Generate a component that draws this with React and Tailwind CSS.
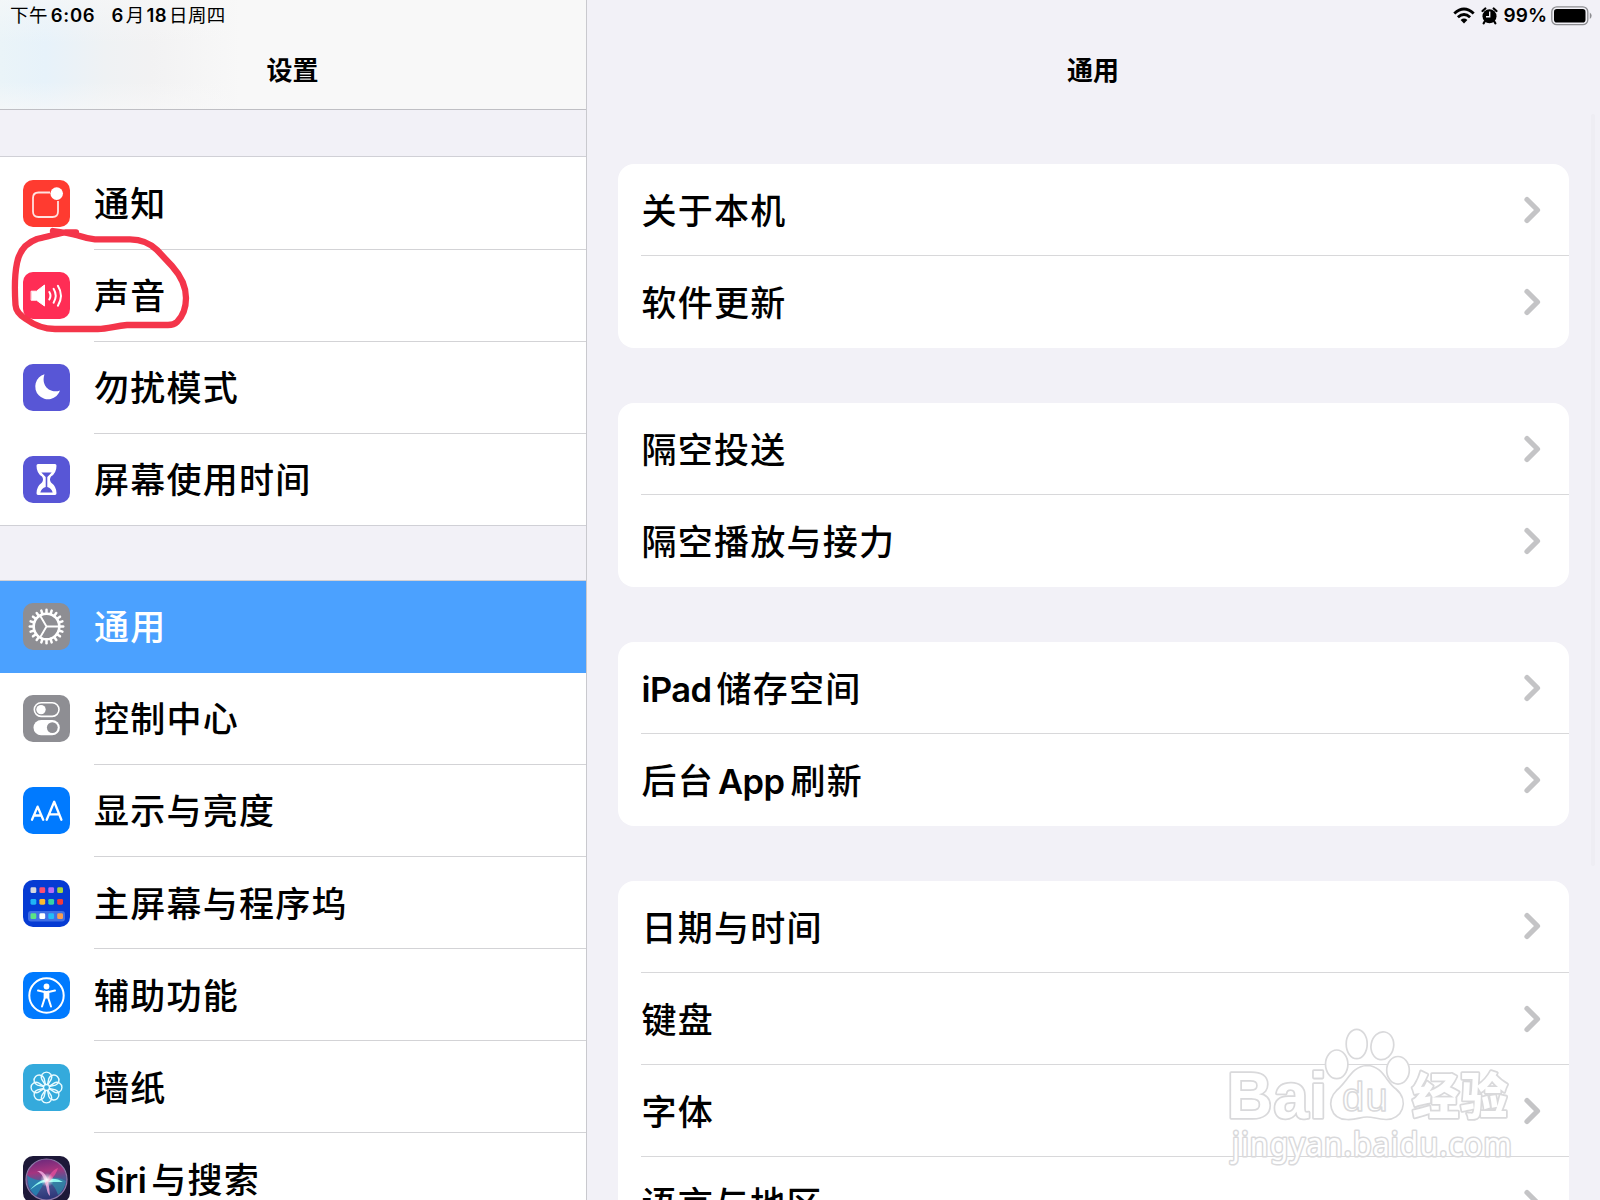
const NotificationIcon = () => (
    <svg viewBox="0 0 47 47" className="size-full" fill="none">
        <path d="M27 12.500H15.500Q10 12.500 10 18V31.500Q10 37 15.500 37H29.500Q35 37 35 31.500V21" stroke="#ffe3e0" strokeWidth="1.800" />
        <circle cx="33.700" cy="13.600" r="6.300" fill="#fff" />
    </svg>
);

const SoundIcon = () => (
    <svg viewBox="0 0 47 47" className="size-full" fill="none" stroke="#fff" strokeLinecap="round">
        <path d="M8.500 19.200H13.500L21.500 13V34L13.500 28.200H8.500Z" fill="#fff" strokeWidth="1" strokeLinejoin="round" />
        <path d="M26.300 20Q28.600 23.700 26.300 27.500M30.600 16.800Q34.800 23.700 30.600 30.700M34.900 13.800Q41 23.700 34.900 33.700" strokeWidth="2" />
    </svg>
);

const MoonIcon = () => (
    <svg viewBox="0 0 47 47" className="size-full">
        <path d="M21.500 10.300A12.700 12.700 0 1 0 37 26.500C28 30 17.500 22.500 21.500 10.300Z" fill="#fff" />
    </svg>
);

const HourglassIcon = () => (
    <svg viewBox="0 0 47 47" className="size-full">
        <path d="M15 8H32Q33.500 8 33.500 9.700Q33.500 17 28 20.500Q26 23.500 28 26.500Q33.500 30.500 33.500 37.300Q33.500 39 32 39H15Q13.500 39 13.500 37.300Q13.500 30.500 19 26.500Q21 23.500 19 20.500Q13.500 17 13.500 9.700Q13.500 8 15 8Z" fill="#fff" />
        <path d="M18.300 16.500H28.700L24.300 21V31Q28.500 32 29.700 36.500H17.300Q18.500 32 22.700 31V21Z" fill="#5856d6" />
    </svg>
);

const GearIcon = () => (
    <svg viewBox="0 0 47 47" className="size-full" fill="none" stroke="#fff">
        <circle cx="23.500" cy="23.500" r="12.800" strokeWidth="2.600" />
        {Array.from({ length: 20 }, (_, i) => (
            <path key={i} d="M23.500 10.500V6.800" strokeWidth="2.500" strokeLinecap="round" transform={`rotate(${i * 18} 23.500 23.500)`} />
        ))}
        <path d="M23.500 23.500H36M23.500 23.500L17.200 12.700M23.500 23.500L17.200 34.300" strokeWidth="1.900" />
    </svg>
);

const ControlIcon = () => (
    <svg viewBox="0 0 47 47" className="size-full" fill="none">
        <rect x="11.300" y="7.800" width="24.700" height="13.600" rx="6.800" stroke="#fff" strokeWidth="1.600" />
        <circle cx="18" cy="14.600" r="4.700" fill="#fff" />
        <rect x="10.500" y="25" width="26.300" height="15.300" rx="7.600" fill="#fff" />
        <circle cx="29.300" cy="32.600" r="5.400" fill="#8e8e93" />
    </svg>
);

const DisplayIcon = () => (
    <svg viewBox="0 0 47 47" className="size-full" fill="none" stroke="#fff" strokeWidth="2.300" strokeLinecap="round" strokeLinejoin="round">
        <path d="M9 32.800L14.600 19.600L20.200 32.800M11 28.500H18.200" />
        <path d="M23.700 32.800L31.200 14.700L38.400 32.800M26.300 27.300H36" />
    </svg>
);

const dots = [
    ['#d5d7e0', '#fb4f71', '#b56cf5', '#a5d53f'],
    ['#1fb5f5', '#fdbb2e', '#35d3a5', '#f23a3a'],
    ['#5be584', '#ffffff', '#23bdf6', '#f99d50'],
];

const HomeIcon = () => (
    <svg viewBox="0 0 47 47" className="size-full">
        <rect x="5" y="31" width="37" height="10.500" rx="3" fill="#3f6fe5" />
        {dots.map((row, y) =>
            row.map((color, x) => (
                <rect key={`${x}-${y}`} x={7.500 + x * 8.900} y={[7.300, 18.900, 33.300][y]} width="5.800" height="5.800" rx="1.400" fill={color} />
            ))
        )}
    </svg>
);

const AccessibilityIcon = () => (
    <svg viewBox="0 0 47 47" className="size-full" fill="none" stroke="#fff">
        <circle cx="23.500" cy="23.500" r="17.200" strokeWidth="2" />
        <circle cx="23.500" cy="14.500" r="2.900" fill="#fff" stroke="none" />
        <path d="M15 18.600L21.500 20H25.500L32 18.600" strokeWidth="2" strokeLinecap="round" strokeLinejoin="round" />
        <path d="M21.700 19.500V26L19 34.500M25.300 19.500V26L28 34.500" strokeWidth="2" strokeLinecap="round" />
        <path d="M20.900 19.500H26.100V26.500H20.900Z" fill="#fff" stroke="none" />
    </svg>
);

const WallpaperIcon = () => (
    <svg viewBox="0 0 47 47" className="size-full" fill="none" stroke="#e9fbff" strokeWidth="1.400">
        {[0, 45, 90, 135, 180, 225, 270, 315].map((angle) => (
            <path
                key={angle}
                d="M22.300 20.800L18.800 15.500A5.200 5.200 0 1 1 28.200 15.500L24.700 20.800"
                transform={`rotate(${angle} 23.500 23.500)`}
            />
        ))}
        <circle cx="23.500" cy="23.500" r="3" />
    </svg>
);

const SiriIcon = () => (
    <svg viewBox="0 0 47 47" className="size-full">
        <defs>
            <linearGradient id="siriOrb" x1="0.4" y1="0" x2="0.55" y2="1">
                <stop offset="0" stopColor="#6d2a7c" />
                <stop offset="0.3" stopColor="#a5347f" />
                <stop offset="0.55" stopColor="#4a5c98" />
                <stop offset="1" stopColor="#2b3274" />
            </linearGradient>
            <radialGradient id="siriGlow">
                <stop offset="0" stopColor="#fff" />
                <stop offset="1" stopColor="#fff" stopOpacity="0" />
            </radialGradient>
        </defs>
        <circle cx="23.500" cy="23.500" r="20.500" fill="url(#siriOrb)" stroke="#8e79a8" strokeWidth="1.200" />
        <path d="M4 19C5 32 9 37 13 40C17 35 20 28 23 24C15 25 8 23 4 19Z" fill="#2388b5" opacity="0.8" />
        <path d="M24 23C33 20 39 23 43 25C42 31 39 36 35 39C33 32 29 27 24 25Z" fill="#2b9cb0" opacity="0.6" />
        <path d="M7 34C13 27 18 24 24 23C31 22 36 23 40 26C32 26 28 26 24 26C18 26 13 29 7 34Z" fill="#8ff7ee" />
        <path d="M14 15C22 14 26 21 27 40C23 37 24 28 20 21C18 17 16 16 14 15Z" fill="#f2a8df" opacity="0.85" />
        <path d="M35 12C29 14 25 20 22 29C27 25 32 21 35 12Z" fill="#e54c9a" opacity="0.8" />
        <circle cx="24" cy="24" r="7" fill="url(#siriGlow)" />
    </svg>
);

const sidebarGroups = [
    [
        { label: '通知', bg: 'bg-[#ff3b30]', Icon: NotificationIcon },
        { label: '声音', bg: 'bg-[#ff2d55]', Icon: SoundIcon },
        { label: '勿扰模式', bg: 'bg-[#5856d6]', Icon: MoonIcon },
        { label: '屏幕使用时间', bg: 'bg-[#5856d6]', Icon: HourglassIcon },
    ],
    [
        { label: '通用', bg: 'bg-[#8e8e93]', Icon: GearIcon, active: true },
        { label: '控制中心', bg: 'bg-[#8e8e93]', Icon: ControlIcon },
        { label: '显示与亮度', bg: 'bg-[#007aff]', Icon: DisplayIcon },
        { label: '主屏幕与程序坞', bg: 'bg-[#063bd3]', Icon: HomeIcon },
        { label: '辅助功能', bg: 'bg-[#007aff]', Icon: AccessibilityIcon },
        { label: '墙纸', bg: 'bg-[#34aadc]', Icon: WallpaperIcon },
        { label: <><Latin>Siri</Latin>与搜索</>, bg: 'bg-[#1d1838]', Icon: SiriIcon },
    ],
];

const detailGroups = [
    ['关于本机', '软件更新'],
    ['隔空投送', '隔空播放与接力'],
    [<><Latin>iPad</Latin>储存空间</>, <>后台<Latin lead>App</Latin>刷新</>],
    ['日期与时间', '键盘', '字体', '语言与地区'],
];

function Latin({ children, lead }) {
    return (
        <span className={`text-[34.5px] font-semibold tracking-[-0.6px] ${lead ? 'ml-[4px] mr-[6px]' : 'mr-[5px]'}`}>
            {children}
        </span>
    );
}

const SidebarRow = ({ item, last }) => {
    const { label, bg, Icon, active } = item;
    return (
        <div className={`flex h-[92.15px] items-center pl-[23.4px] ${active ? 'bg-[#4ba1ff] text-white' : ''}`}>
            <div className={`size-[47px] shrink-0 overflow-hidden rounded-[10px] ${bg}`}>
                <Icon />
            </div>
            <div className={`ml-[23.6px] flex h-full flex-1 items-center border-b ${last || active ? 'border-transparent' : 'border-[#d3d3d6]'}`}>
                <span className="pt-[3px]">{label}</span>
            </div>
        </div>
    );
};

const DetailRow = ({ label, last }) => (
    <div className="h-[92.15px] pl-[23px]">
        <div className={`flex h-full items-center justify-between border-b pr-[28px] ${last ? 'border-transparent' : 'border-[#d8d8da]'}`}>
            <span className="pl-[0.5px] pt-1">{label}</span>
            <svg width="18" height="28" viewBox="0 0 18 28" fill="none" stroke="#c4c4c6" strokeWidth="5.200" strokeLinecap="round" strokeLinejoin="round">
                <path d="M4 3.500L14.500 14L4 24.500" />
            </svg>
        </div>
    </div>
);

const StatusIcons = () => (
    <div className="flex h-[31px] items-center justify-end pr-[8px] font-semibold">
        <svg width="22" height="17" viewBox="0 0 22 17" fill="none" stroke="#000" strokeWidth="2.900">
            <path d="M1.300 6.500Q11 -2.300 20.700 6.500" />
            <path d="M4.900 10.200Q11 4.600 17.100 10.200" />
            <path d="M11 16.500L7.600 13Q11 10.200 14.400 13Z" fill="#000" stroke="none" />
        </svg>
        <svg className="ml-[6px]" width="17" height="18" viewBox="0 0 17 18">
            <circle cx="8.500" cy="9.300" r="7" />
            <path d="M1.500 4L4.300 1.500M15.500 4L12.700 1.500M3.700 14.500L2.700 16.300M13.300 14.500L14.300 16.300" stroke="#000" strokeWidth="2.200" strokeLinecap="round" />
            <path d="M8.700 4.500V9.700H5" stroke="#f2f1f7" strokeWidth="1.400" fill="none" />
        </svg>
        <span className="ml-[6px] text-[19px] leading-none">99%</span>
        <svg className="ml-[4px]" width="41" height="20" viewBox="0 0 41 20">
            <rect x="0.800" y="0.800" width="36" height="17.900" rx="5" fill="none" stroke="#8d8d91" strokeWidth="1.300" />
            <rect x="3" y="3" width="31.500" height="13.500" rx="2.800" />
            <path d="M38.800 6.500Q42.500 9.700 38.800 13Z" fill="#8d8d91" />
        </svg>
    </div>
);

const Scribble = () => (
    <svg className="absolute left-0 top-[220px]" width="200" height="120" viewBox="0 220 200 120" fill="none">
        <path
            d="M53 231Q68 233 78 235.500Q87 238.500 95 239.300H130C141 239.500 150 243 157 250L172 266C181 276 186 286 186 298C186 308 182 317 177 322Q174 325 168 325H127C115 326 108 329 98 329H55C43 329 34 325 26 319Q16 313 15.500 305C14.500 290 14.500 275 17 263C19 252 26 243 37 239C46 237 56 234 65 232.500H76"
            stroke="#f4354a"
            strokeWidth="6.300"
            strokeLinecap="round"
            strokeLinejoin="round"
        />
    </svg>
);

const Watermark = () => (
    <svg
        className="absolute left-[1220px] top-[1020px]"
        width="310"
        height="150"
        viewBox="1220 1020 310 150"
        fill="#fff"
        stroke="#d9d9db"
        strokeWidth="1.700"
        strokeLinejoin="round"
    >
        <text x="1227" y="1118" fontSize="65" fontWeight="700" textLength="101" lengthAdjust="spacingAndGlyphs" fontFamily="Liberation Sans, sans-serif" paintOrder="stroke" strokeWidth="3.600">Bai</text>
        <ellipse cx="1336.700" cy="1064.300" rx="11.200" ry="14.300" />
        <ellipse cx="1356.700" cy="1044" rx="10.500" ry="14.700" />
        <ellipse cx="1382.300" cy="1045.700" rx="11.300" ry="14" transform="rotate(10 1382 1046)" />
        <ellipse cx="1398" cy="1070.300" rx="11.300" ry="13.800" />
        <path d="M1367 1065.500C1383 1066 1386 1082 1396 1089C1410 1101 1402 1120 1386 1119.500C1376 1119 1374 1117 1367 1117C1360 1117 1357 1120 1347 1119.500C1330 1119 1326 1101 1337 1090C1348 1081 1352 1066 1367 1065.500Z" />
        <text x="1342" y="1110.500" fontSize="40" fontWeight="400" textLength="47" lengthAdjust="spacingAndGlyphs" fontFamily="Liberation Sans, sans-serif" strokeWidth="1.500">du</text>
        <text x="1412" y="1114" fontSize="49" fontWeight="900" textLength="97" lengthAdjust="spacingAndGlyphs" fontFamily="Noto Sans CJK SC, sans-serif" paintOrder="stroke" strokeWidth="3.600">经验</text>
        <text x="1232" y="1156" fontSize="33" fontWeight="400" textLength="281" lengthAdjust="spacingAndGlyphs" fontFamily="Noto Sans, sans-serif" paintOrder="stroke" strokeWidth="3.200">jingyan.baidu.com</text>
    </svg>
);

export default function App() {
    return (
        <div className="relative flex h-[1200px] w-[1600px] overflow-hidden bg-[#f2f1f7] font-['Inter','Noto_Sans_CJK_SC',sans-serif] text-[35px] font-medium leading-none tracking-[1.25px] text-black">
            <aside className="flex w-[587px] shrink-0 flex-col border-r border-[#c9c9ce]">
                <header className="h-[110px] shrink-0 border-b border-[#bfbfc4] bg-[linear-gradient(to_bottom,#f8f8f899,transparent_40%,transparent_75%,#f8f8f8aa),linear-gradient(to_right,#eaf4f8,#e7f2fa_45px,#eff2f4_105px,#f2f2f3_150px,#f8f8f8_240px)]">
                    <div className="flex h-[31px] items-center gap-[16px] pl-[10px] text-[18.5px] font-normal tracking-[0.4px]">
                        <span>下午<b className="ml-[3px] font-semibold tracking-[0.7px]">6:06</b></span>
                        <span><b className="mr-[2px] font-semibold">6</b>月<b className="mx-[2px] font-semibold">18</b>日周四</span>
                    </div>
                    <h1 className="mt-[27px] pr-px text-center text-[26px] font-bold tracking-normal">设置</h1>
                </header>
                <div className="mt-[47.4px] flex flex-col gap-[54.6px]">
                    {sidebarGroups.map((group, i) => (
                        <div key={i} className="bg-white shadow-[0_-1px_0_#d0d0d6,inset_0_-1px_0_#d0d0d6]">
                            {group.map((item, j) => (
                                <SidebarRow key={j} item={item} last={j === group.length - 1} />
                            ))}
                        </div>
                    ))}
                </div>
            </aside>

            <main className="flex-1 pl-[31px] pr-[31px]">
                <div className="-mr-[31px] tracking-normal">
                    <StatusIcons />
                </div>
                <h1 className="mt-[27px] pr-px text-center text-[26px] font-bold tracking-normal">通用</h1>
                <div className="mt-[80px] flex flex-col gap-[54.7px]">
                    {detailGroups.map((group, i) => (
                        <div key={i} className="rounded-[16px] bg-white">
                            {group.map((label, j) => (
                                <DetailRow key={j} label={label} last={j === group.length - 1} />
                            ))}
                        </div>
                    ))}
                </div>
            </main>

            <div className="absolute left-[1591px] top-[114px] h-[752px] w-[4px] rounded-full bg-[#eeedf3]" />
            <Scribble />
            <Watermark />
        </div>
    );
}
